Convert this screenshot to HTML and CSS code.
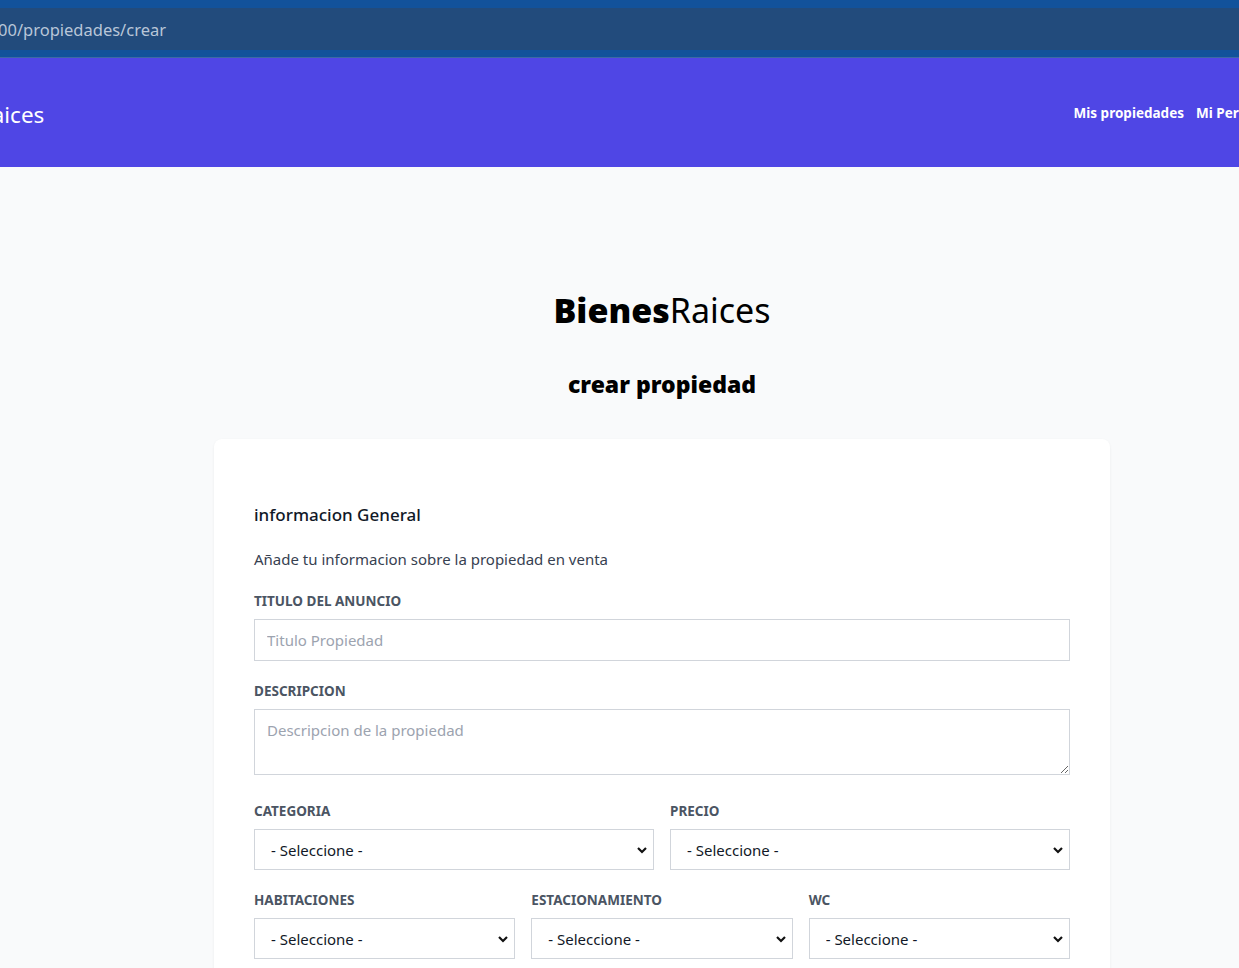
FILE: index.html
```html
<!DOCTYPE html>
<html lang="es">
<head>
<meta charset="utf-8">
<title>Crear propiedad</title>
<link rel="stylesheet" href="styles.css">
</head>
<body>
<div class="chrome">
  <div class="urlbar">00/propiedades/crear</div>
</div>
<header class="site-header">
  <a class="brand" href="#"><span class="brand-bold">Bienes</span>Raices</a>
  <nav class="nav">
    <a href="#">Mis propiedades</a>
    <a href="#">Mi Perfil</a>
  </nav>
</header>
<main class="main">
  <h1 class="logo"><span class="logo-bold">Bienes</span>Raices</h1>
  <h2 class="page-title">crear propiedad</h2>
  <div class="card">
    <form class="form">
      <h3 class="section-title">informacion General</h3>
      <p class="section-desc">Añade tu informacion sobre la propiedad en venta</p>

      <div class="field">
        <label class="label" for="titulo">Titulo del anuncio</label>
        <input class="input" id="titulo" type="text" placeholder="Titulo Propiedad">
      </div>

      <div class="field field-textarea">
        <label class="label" for="descripcion">Descripcion</label>
        <textarea class="input textarea" id="descripcion" placeholder="Descripcion de la propiedad"></textarea>
      </div>

      <div class="row row-2">
        <div class="field">
          <label class="label" for="categoria">Categoria</label>
          <select class="input select" id="categoria"><option>- Seleccione -</option></select>
        </div>
        <div class="field">
          <label class="label" for="precio">Precio</label>
          <select class="input select" id="precio"><option>- Seleccione -</option></select>
        </div>
      </div>

      <div class="row row-3">
        <div class="field">
          <label class="label" for="habitaciones">Habitaciones</label>
          <select class="input select" id="habitaciones"><option>- Seleccione -</option></select>
        </div>
        <div class="field">
          <label class="label" for="estacionamiento">Estacionamiento</label>
          <select class="input select" id="estacionamiento"><option>- Seleccione -</option></select>
        </div>
        <div class="field">
          <label class="label" for="wc">WC</label>
          <select class="input select" id="wc"><option>- Seleccione -</option></select>
        </div>
      </div>
    </form>
  </div>
</main>
</body>
</html>
```
FILE: styles.css
```css
* { box-sizing: border-box; }
html, body { margin: 0; padding: 0; }
body {
  width: 1239px;
  height: 968px;
  overflow: hidden;
  background: #f9fafb;
  font-family: "Noto Sans", "Open Sans", sans-serif;
  font-size: 15px;
  color: #111827;
}
.chrome {
  height: 58px;
  background: #12529b;
  padding-top: 8px;
  border-bottom: 1px solid #3d6aa5;
}
.urlbar {
  height: 42px;
  background: #224b7c;
  color: #b9c6d8;
  font-size: 16.5px;
  line-height: 44px;
  margin-left: -2px;
}
.site-header {
  height: 109px;
  background: #4f46e5;
  display: flex;
  align-items: center;
  justify-content: space-between;
  color: #fff;
}
.brand {
  color: #fff;
  text-decoration: none;
  font-size: 22.5px;
  margin-left: -98px;
  margin-top: 4px;
}
.brand-bold { font-weight: 800; }
.nav {
  display: flex;
  gap: 12px;
  margin-right: -13px;
}
.nav a {
  color: #fff;
  text-decoration: none;
  font-weight: 700;
  font-size: 13.5px;
}
.main {
  padding: 123px 0 0 85px;
}
.logo {
  margin: 0;
  text-align: center;
  font-size: 34px;
  font-weight: 400;
  line-height: 40px;
  color: #000;
}
.logo-bold { font-weight: 900; }
.page-title {
  margin: 38px 0 0;
  text-align: center;
  font-size: 23px;
  font-weight: 900;
  line-height: 32px;
  color: #000;
}
.card {
  width: 896px;
  margin: 39px auto 0;
  background: #fff;
  border-radius: 8px;
  box-shadow: 0 1px 3px rgba(0,0,0,0.06);
  padding: 64px 40px 40px;
}
.form { display: flex; flex-direction: column; gap: 20px; }
.section-title {
  margin: 0;
  font-size: 17px;
  font-weight: 500;
  line-height: 24px;
  color: #111827;
}
.section-desc {
  margin: 0;
  font-size: 15px;
  line-height: 24px;
  color: #374151;
}
.field { display: flex; flex-direction: column; gap: 8px; }
.field-textarea { margin-bottom: 6px; }
.label {
  font-size: 13.5px;
  font-weight: 700;
  text-transform: uppercase;
  color: #4b5563;
  line-height: 20px;
}
.input {
  width: 100%;
  height: 42px;
  border: 1px solid #d1d5db;
  background: #fff;
  font-family: inherit;
  font-size: 15px;
  padding: 0 12px;
  color: #111827;
  border-radius: 0;
}
.input::placeholder { color: #9ca3af; }
.textarea {
  height: 66px;
  padding: 10px 12px;
  resize: vertical;
}
.select {
  height: 41px;
  appearance: none;
  -webkit-appearance: none;
  padding-left: 16px;
  background-image: url("data:image/svg+xml,%3Csvg xmlns='http://www.w3.org/2000/svg' width='12' height='8' viewBox='0 0 12 8'%3E%3Cpath d='M2 2l4 4 4-4' fill='none' stroke='%23111' stroke-width='2.2'/%3E%3C/svg%3E");
  background-repeat: no-repeat;
  background-position: right 5px center;
}
.row { display: grid; gap: 16px; }
.row-2 { grid-template-columns: 1fr 1fr; }
.row-3 { grid-template-columns: 1fr 1fr 1fr; }
```
